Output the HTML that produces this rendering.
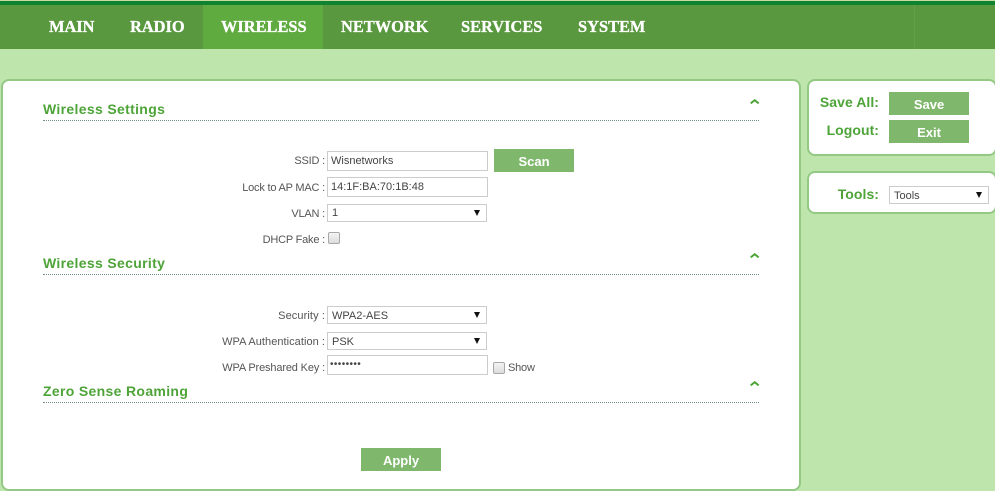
<!DOCTYPE html>
<html>
<head>
<meta charset="utf-8">
<style>
html,body{margin:0;padding:0;width:995px;height:491px;overflow:hidden;background:#bde5ac;font-family:"Liberation Sans",sans-serif;}
.a{position:absolute;}
#top{left:0;top:0;width:995px;height:1px;background:#c9dca0;}
#top2{left:0;top:1px;width:995px;height:4px;background:#0f832f;}
#nav{left:0;top:5px;width:995px;height:44px;background:#59983f;}
#act{left:203px;top:5px;width:120px;height:44px;background:#5fab40;}
#sep{left:914px;top:5px;width:1px;height:44px;background:#629f48;}
.n{position:absolute;top:16px;font:bold 16.4px/21px "Liberation Serif",serif;color:#fff;white-space:nowrap;-webkit-text-stroke:.3px #fff;}
.panel{position:absolute;background:#fff;border:2px solid #94c985;border-radius:8px;box-sizing:border-box;}
.h{position:absolute;left:43px;font:bold 14px/16px "Liberation Sans",sans-serif;color:#4ea438;letter-spacing:.33px;white-space:nowrap;}
.rule{position:absolute;left:43px;width:716px;height:0;border-top:1px dotted #6f8f80;}
.lab{position:absolute;right:670px;font:11px/14px "Liberation Sans",sans-serif;letter-spacing:-.2px;color:#555;white-space:nowrap;}
.inp{position:absolute;left:327px;box-sizing:border-box;border:1px solid #ccc;background:#fff;font:11px/14px "Liberation Sans",sans-serif;color:#444;padding-left:3px;white-space:nowrap;}
.arr{position:absolute;width:0;height:0;border-left:3px solid transparent;border-right:3px solid transparent;border-top:6px solid #111;}
.btn{position:absolute;width:80px;height:23px;background:#7fb76d;color:#fff;font:bold 13px/25px "Liberation Sans",sans-serif;text-align:center;}
.chk{position:absolute;width:10px;height:10px;border:1px solid #a8a8a8;border-radius:2px;background:linear-gradient(#f4f4f4,#dcdcdc);}
.ch{position:absolute;}
.side{position:absolute;font:bold 14px/16px "Liberation Sans",sans-serif;color:#4ea438;letter-spacing:.05px;text-align:right;right:116px;white-space:nowrap;}
</style>
</head>
<body>
<div class="a" id="top"></div>
<div class="a" id="top2"></div>
<div class="a" id="nav"></div>
<div class="a" id="act"></div>
<div class="a" id="sep"></div>
<div class="n" style="left:49px">MAIN</div>
<div class="n" style="left:130px">RADIO</div>
<div class="n" style="left:221px">WIRELESS</div>
<div class="n" style="left:341px">NETWORK</div>
<div class="n" style="left:461px">SERVICES</div>
<div class="n" style="left:578px">SYSTEM</div>

<div class="panel" style="left:1px;top:79px;width:800px;height:412px;"></div>

<div class="h" style="top:101px">Wireless Settings</div>
<div class="rule" style="top:120px"></div>
<svg class="ch" style="left:750px;top:99px" width="10" height="7"><path d="M.7 4.4L4.7 1.2L8.7 4.4" fill="none" stroke="#4ea438" stroke-width="2"/></svg>

<div class="lab" style="top:154px">SSID :</div>
<div class="inp" style="top:151px;height:20px;width:161px;line-height:18px">Wisnetworks</div>
<div class="btn" style="left:494px;top:149px">Scan</div>

<div class="lab" style="top:181px">Lock to AP MAC :</div>
<div class="inp" style="top:177px;height:20px;width:161px;line-height:18px">14:1F:BA:70:1B:48</div>

<div class="lab" style="top:207px">VLAN :</div>
<div class="inp" style="top:204px;height:18px;width:160px;line-height:16px;padding-left:4px">1</div>
<div class="arr" style="left:474px;top:210px"></div>

<div class="lab" style="top:233px">DHCP Fake :</div>
<div class="chk" style="left:328px;top:232px"></div>

<div class="h" style="top:255px">Wireless Security</div>
<div class="rule" style="top:274px"></div>
<svg class="ch" style="left:750px;top:253px" width="10" height="7"><path d="M.7 4.4L4.7 1.2L8.7 4.4" fill="none" stroke="#4ea438" stroke-width="2"/></svg>

<div class="lab" style="top:309px;letter-spacing:.1px">Security :</div>
<div class="inp" style="top:306px;height:18px;width:160px;line-height:18px;padding-left:4px">WPA2-AES</div>
<div class="arr" style="left:474px;top:312px"></div>

<div class="lab" style="top:335px;letter-spacing:.05px">WPA Authentication :</div>
<div class="inp" style="top:332px;height:18px;width:160px;line-height:18px;padding-left:4px">PSK</div>
<div class="arr" style="left:474px;top:338px"></div>

<div class="lab" style="top:361px;letter-spacing:-.15px">WPA Preshared Key :</div>
<div class="inp" style="top:355px;height:20px;width:161px;line-height:18px;padding-left:2px;font-size:10px;letter-spacing:.4px">••••••••</div>
<div class="chk" style="left:493px;top:362px"></div>
<div class="lab" style="left:508px;right:auto;top:361px">Show</div>

<div class="h" style="top:383px">Zero Sense Roaming</div>
<div class="rule" style="top:402px"></div>
<svg class="ch" style="left:750px;top:381px" width="10" height="7"><path d="M.7 4.4L4.7 1.2L8.7 4.4" fill="none" stroke="#4ea438" stroke-width="2"/></svg>

<div class="btn" style="left:361px;top:448px">Apply</div>

<div class="panel" style="left:807px;top:79px;width:190px;height:77px;"></div>
<div class="side" style="top:94px">Save All:</div>
<div class="btn" style="left:889px;top:92px">Save</div>
<div class="side" style="top:122px">Logout:</div>
<div class="btn" style="left:889px;top:120px">Exit</div>

<div class="panel" style="left:807px;top:171px;width:190px;height:43px;"></div>
<div class="side" style="top:186px">Tools:</div>
<div class="inp" style="left:889px;top:186px;height:18px;width:100px;line-height:18px;font-size:11px;padding-left:4px">Tools</div>
<div class="arr" style="left:976px;top:192px"></div>
</body>
</html>
